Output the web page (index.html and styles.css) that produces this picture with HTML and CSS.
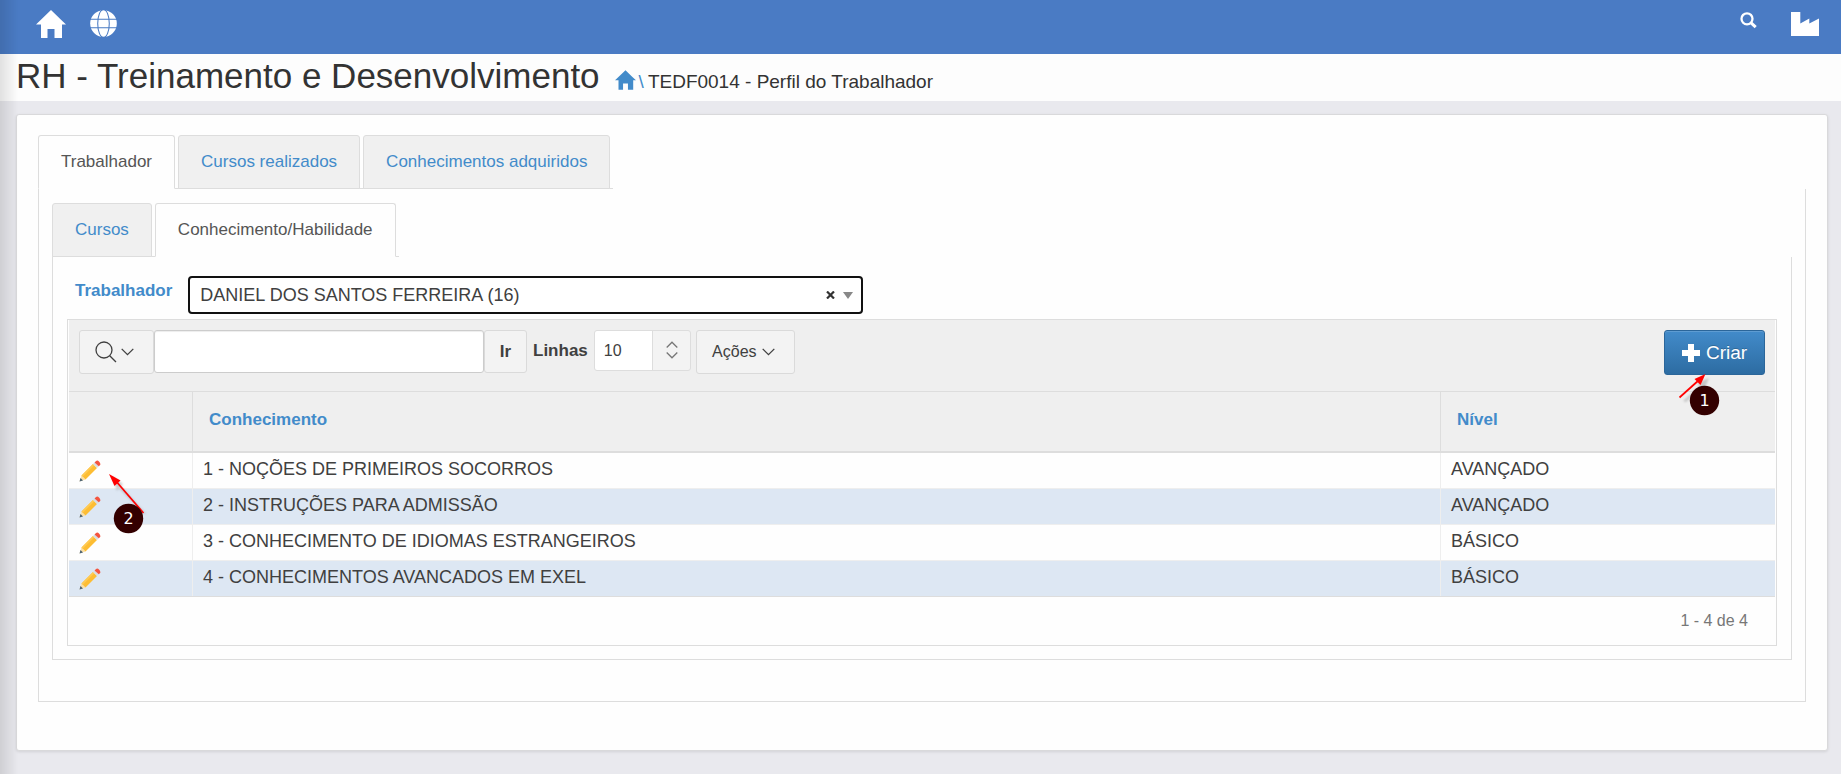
FILE: index.html
```html
<!DOCTYPE html>
<html lang="pt-BR">
<head>
<meta charset="utf-8">
<title>RH - Treinamento e Desenvolvimento</title>
<link rel="stylesheet" href="styles.css">
</head>
<body>
<svg class="symbols" aria-hidden="true">
  <symbol id="home" viewBox="0 0 30 28"><path d="M15 0 0 14.500h5V28h6.500v-9h7v9H26V14.500h4L24.500 9.200 15 0z"/></symbol>
  <symbol id="chevron" viewBox="0 0 13 8"><path d="M.7.900 6.500 6.700 12.300.900" fill="none" stroke="currentColor" stroke-width="1.300"/></symbol>
  <symbol id="pencil" viewBox="0 0 22 22">
    <path d="M.500 21.500 2.500 15.500 6.500 19.500z" fill="#fbdfa6"/>
    <path d="M.500 21.500 1.500 18 4 20.500z" fill="#4d6473"/>
    <path d="M2.500 15.500 14 4 18 8 6.500 19.500z" fill="#fdbd33"/>
    <path d="M2.500 15.500 14 4l1.300 1.300L3.800 16.800z" fill="#ffca52"/>
    <path d="M14 4l2-2 4 4-2 2z" fill="#d9dde1"/>
    <path d="M15.600 2.400 17 1q1.500-1 3 .5t1.400 3.200L19.800 6.200z" fill="#f4543f"/>
  </symbol>
</svg>

<header class="topbar">
  <nav class="topbar-group" aria-label="Principal">
    <a href="#" aria-label="Início"><svg class="icon-home" width="30" height="28"><use href="#home"/></svg></a>
    <a href="#" aria-label="Idioma"><svg width="27" height="27" viewBox="0 0 28 28"><circle cx="14" cy="14" r="13.800" fill="#fff"/><g fill="none" stroke="#4a7bc4" stroke-width="1.100"><ellipse cx="14" cy="14" rx="6" ry="14.500"/><path d="M0 9.500h28M0 18.500h28"/></g></svg></a>
  </nav>
  <div class="topbar-group tools">
    <a href="#" aria-label="Pesquisar"><svg width="17" height="17" viewBox="0 0 17 17" fill="none" stroke="#fff"><circle cx="7" cy="6.800" r="5.500" stroke-width="2.300"/><path d="M10.800 10.600 15.700 15.200" stroke-width="3"/></svg></a>
    <a href="#" aria-label="Empresa"><svg width="28" height="24" viewBox="0 0 28 24"><path d="M0 24V0h9.300v11.500L18.300 6.500v5L28 6.500V24z" fill="#fff"/></svg></a>
  </div>
</header>

<div class="titlebar">
  <h1>RH - Treinamento e Desenvolvimento</h1>
  <nav class="crumbs" aria-label="Trilha">
    <a href="#" aria-label="Página inicial"><svg width="21" height="20"><use href="#home"/></svg>\</a>
    <span>TEDF0014 - Perfil do Trabalhador</span>
  </nav>
</div>

<main class="panel">
  <nav class="tabs">
    <a class="tab active" href="#">Trabalhador</a>
    <a class="tab" href="#">Cursos realizados</a>
    <a class="tab" href="#">Conhecimentos adquiridos</a>
  </nav>
  <section class="tab-body outer">
    <nav class="tabs">
      <a class="tab" href="#">Cursos</a>
      <a class="tab active" href="#">Conhecimento/Habilidade</a>
    </nav>
    <div class="tab-body inner">
      <div class="field">
        <label for="worker">Trabalhador</label>
        <div class="combo">
          <select id="worker"><option>DANIEL DOS SANTOS FERREIRA (16)</option></select>
          <button class="clear" type="button" aria-label="Limpar"><svg width="9" height="8" viewBox="0 0 9 8"><path d="M1 .500 8 7.500M8 .500 1 7.500" stroke="#333" stroke-width="2.200"/></svg></button>
          <svg class="caret" width="10" height="7" viewBox="0 0 10 7"><path d="M0 0h10L5 7z" fill="#888"/></svg>
        </div>
      </div>

      <div class="report">
        <div class="toolbar">
          <div class="search">
            <button class="btn btn-search" type="button" aria-label="Colunas de pesquisa">
              <svg width="22" height="22" viewBox="0 0 22 22" fill="none" stroke="currentColor" stroke-width="1.300"><circle cx="9" cy="9" r="8"/><path d="M14.700 14.700 21 21"/></svg>
              <svg width="13" height="8"><use href="#chevron"/></svg>
            </button>
            <input class="query" type="text" aria-label="Pesquisar">
            <button class="btn btn-go" type="button">Ir</button>
          </div>
          <label class="rows-label" for="rows">Linhas</label>
          <div class="rows">
            <select id="rows"><option>10</option></select>
            <svg class="updown" width="12" height="18" viewBox="0 0 12 18" fill="none" stroke="#777" stroke-width="1.300"><path d="M.7 6.500 6 1.200l5.300 5.300M.7 11.500 6 16.800l5.300-5.300"/></svg>
          </div>
          <button class="btn btn-actions" type="button">Ações <svg width="13" height="8"><use href="#chevron"/></svg></button>
          <div class="create-wrap">
            <button class="create" type="button"><svg width="18" height="18" viewBox="0 0 18 18"><path d="M6 0h6v6h6v6h-6v6H6v-6H0V6h6z" fill="#fff"/></svg>Criar</button>
            <svg class="callout" width="60" height="90" viewBox="0 0 60 90">
              <path class="shade" d="M19 71 36 56 33 53 45 48 40 60 37 57 22 72z"/>
              <path d="M15.500 67.500 35 50" stroke="#f00" stroke-width="1.700"/>
              <path d="M41.500 44 30.500 49 36.500 55z" fill="#f00"/>
              <circle cx="40.500" cy="70.500" r="14.700" fill="#300"/>
              <text x="40.500" y="76">1</text>
            </svg>
          </div>
        </div>

        <table>
          <colgroup><col class="c-edit"><col><col class="c-level"></colgroup>
          <thead><tr><th></th><th><a href="#">Conhecimento</a></th><th><a href="#">Nível</a></th></tr></thead>
          <tbody>
            <tr><td class="edit"><a href="#" aria-label="Editar"><svg width="22" height="22"><use href="#pencil"/></svg></a>
              <svg class="callout" width="84" height="84" viewBox="0 0 84 84">
                <path class="shade" d="M43 23 54 31 52 33 77 61 75 61 50 35 48 38z"/>
                <path d="M46 27 74.500 60" stroke="#f00" stroke-width="1.700"/>
                <path d="M40 21 51.500 27.500 45.500 33z" fill="#f00"/>
                <circle cx="59.500" cy="65.500" r="14.700" fill="#300"/>
                <text x="59.500" y="71">2</text>
              </svg></td><td>1 - NOÇÕES DE PRIMEIROS SOCORROS</td><td>AVANÇADO</td></tr>
            <tr><td class="edit"><a href="#" aria-label="Editar"><svg width="22" height="22"><use href="#pencil"/></svg></a></td><td>2 - INSTRUÇÕES PARA ADMISSÃO</td><td>AVANÇADO</td></tr>
            <tr><td class="edit"><a href="#" aria-label="Editar"><svg width="22" height="22"><use href="#pencil"/></svg></a></td><td>3 - CONHECIMENTO DE IDIOMAS ESTRANGEIROS</td><td>BÁSICO</td></tr>
            <tr><td class="edit"><a href="#" aria-label="Editar"><svg width="22" height="22"><use href="#pencil"/></svg></a></td><td>4 - CONHECIMENTOS AVANCADOS EM EXEL</td><td>BÁSICO</td></tr>
          </tbody>
        </table>
        <p class="pager">1 - 4 de 4</p>
      </div>
    </div>
  </section>
</main>
<div class="edge-shade"></div>
</body>
</html>
```
FILE: styles.css
```css
* { box-sizing: border-box; }
body {
  margin: 0;
  min-height: 100vh;
  background: #e9e9ee;
  color: #404040;
  font: 17px/20px "Liberation Sans", Arial, sans-serif;
}
a { color: #428bca; text-decoration: none; }
svg { display: block; flex: none; }
button, input, select { font: inherit; color: inherit; }
.symbols { position: absolute; width: 0; height: 0; }

/* Header */
.topbar {
  display: flex;
  justify-content: space-between;
  height: 54px;
  padding: 10px 22px 0 36px;
  background: #4a7bc4;
}
.topbar-group { display: flex; gap: 24px; }
.topbar-group a { height: 28px; }
.icon-home { fill: #fff; }
.tools { gap: 34px; padding-top: 2px; }
.titlebar {
  display: flex;
  align-items: flex-start;
  gap: 15px;
  height: 47px;
  padding-left: 16px;
  background: #fdfdfd;
  color: #333;
}
h1 { margin: 0; font-size: 35px; font-weight: 400; line-height: 44px; }
.crumbs { display: flex; gap: 4px; padding-top: 18px; font-size: 19px; }
.crumbs a { display: flex; gap: 3px; }
.crumbs svg { margin-top: -2px; fill: #428bca; }

/* Panel and tabs */
.panel {
  margin: 13px 13px 22px 16px;
  padding: 20px 21px 48px;
  background: #fefefe;
  border: 1px solid #d9d9db;
  border-radius: 3px;
  box-shadow: 0 1px 3px rgba(0, 0, 0, .1);
}
.tabs {
  display: flex;
  width: fit-content;
  border-bottom: 1px solid #ddd;
}
.tab {
  margin: 0 3px -1px 0;
  padding: 16px 22px;
  background: #f0f0f0;
  border: 1px solid #ddd;
  border-radius: 3px 3px 0 0;
}
.tab.active { background: #fefefe; color: #555; border-bottom-color: #fefefe; }
.tab-body { border: 1px solid #ddd; border-top: 0; }
.outer { padding: 14px 13px 41px; }
.inner { padding: 19px 14px 13px; }

/* Worker field */
.field { display: flex; align-items: flex-start; gap: 16px; padding-left: 8px; }
.field label { padding-top: 5px; color: #428bca; font-weight: 700; }
.combo { position: relative; width: 675px; }
.combo select {
  display: block;
  width: 100%;
  height: 38px;
  padding: 0 60px 0 10px;
  appearance: none;
  background: #fff;
  border: 2px solid #111;
  border-radius: 4px;
  outline: 0;
  font-size: 18px;
}
.clear { position: absolute; right: 28px; top: 15px; padding: 0; border: 0; background: none; }
.caret { position: absolute; right: 10px; top: 16px; pointer-events: none; }

/* Report */
.report { margin-top: 5px; padding: 0 1px; border: 1px solid #ddd; }
.toolbar {
  display: flex;
  align-items: flex-start;
  height: 71px;
  padding: 10px 10px 0;
  background: #efefef;
}
.search { display: flex; }
.btn {
  display: flex;
  align-items: center;
  justify-content: center;
  height: 44px;
  padding: 0 4px 0 0;
  background: #f3f3f3;
  border: 1px solid #dadada;
  border-radius: 3px;
}
.btn-search { width: 75px; gap: 4px; }
.query {
  width: 330px;
  height: 43px;
  padding: 0 8px;
  background: #fff;
  border: 1px solid #ccc;
  border-radius: 3px;
  box-shadow: inset 0 1px 1px rgba(0, 0, 0, .075);
}
.btn-go { width: 43px; height: 43px; padding: 0; font-size: 17px; font-weight: 700; }
.rows-label { padding: 11px 6px 0; font-weight: 700; }
.rows { position: relative; width: 97px; }
.rows select {
  display: block;
  width: 100%;
  height: 41px;
  padding: 0 9px;
  appearance: none;
  background: linear-gradient(to right, #fff 57px, #ddd 57px, #ddd 58px, #f3f3f3 58px);
  border: 1px solid #ddd;
  border-radius: 3px;
  font-size: 16px;
}
.updown { position: absolute; right: 13px; top: 11px; pointer-events: none; }
.btn-actions { width: 99px; margin-left: 5px; gap: 5px; font-size: 16px; }
.create-wrap { position: relative; margin-left: auto; }
.create {
  display: flex;
  align-items: center;
  justify-content: center;
  gap: 6px;
  width: 101px;
  height: 45px;
  padding: 0;
  color: #fff;
  font-size: 19px;
  text-shadow: 0 -1px 0 rgba(0, 0, 0, .2);
  background: linear-gradient(#428bca, #2d6ca2);
  border: 1px solid #2b669a;
  border-radius: 3px;
  box-shadow: inset 0 1px 0 rgba(255, 255, 255, .15);
}
.callout { position: absolute; left: 0; top: 0; z-index: 1; pointer-events: none; }
.callout text { fill: #fff; font: 16px "DejaVu Sans", sans-serif; text-anchor: middle; }
.callout .shade { fill: #888; opacity: .4; filter: blur(1px); }

table { width: 100%; table-layout: fixed; border-collapse: separate; border-spacing: 0; border-bottom: 1px solid #ddd; font-size: 18px; }
.c-edit { width: 124px; }
.c-level { width: 334px; }
th {
  height: 62px;
  padding: 0 16px 4px;
  font-size: 17px;
  text-align: left;
  background: #efefef;
  border-top: 1px solid #ddd;
  border-bottom: 2px solid #ddd;
  border-right: 1px solid #ddd;
}
td { height: 36px; padding: 0 10px 4px; border-top: 1px solid #eee; border-right: 1px solid #eee; }
th:last-child, td:last-child { border-right: 0; }
tr:nth-child(even) td { background: #dde7f3; }
tbody tr:first-child td { height: 35px; border-top: 0; }
.edit { position: relative; }
td.edit { padding-bottom: 0; }
.edit a { display: block; }
.pager { margin: 0; padding: 14px 27px 14px 0; text-align: right; color: #777; font-size: 16px; }

.edge-shade {
  position: fixed;
  inset: 0 auto 0 0;
  width: 18px;
  pointer-events: none;
  background: linear-gradient(to right, rgba(0, 0, 0, .11), rgba(0, 0, 0, 0));
}
```
